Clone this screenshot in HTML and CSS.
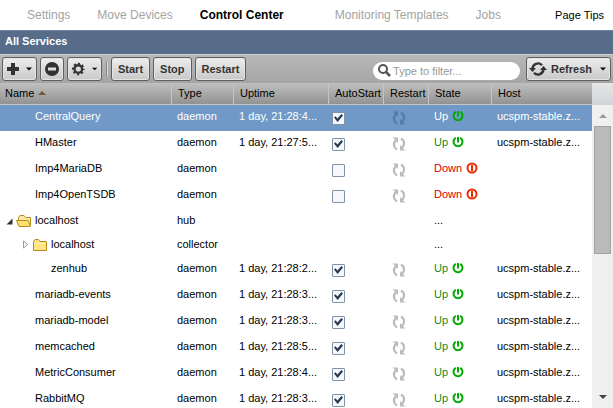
FILE: index.html
```html
<!DOCTYPE html>
<html lang="en">
<head>
<meta charset="utf-8">
<title>Control Center</title>
<link rel="stylesheet" href="styles.css">
</head>
<body>
<svg class="sprite" aria-hidden="true">
  <symbol id="cycle" viewBox="0 0 14 14">
    <path d="M5 12.500C1.500 10.500 1 6.500 3.500 3.500M9 1.500C12.500 3.500 13 7.500 10.500 10.500" fill="none" stroke="currentColor" stroke-width="2.200"/>
    <path d="M0.500 0.500H6V6L4.300 4.300L2.500 5.500L3 2.500ZM13.500 13.500H8V8L9.700 9.700L11.500 8.500L11 11.500Z" fill="currentColor"/>
  </symbol>
  <symbol id="up" viewBox="0 0 12 12">
    <path d="M3.800 1.900A4.500 4.500 0 1 0 8.200 1.900" fill="none" stroke="currentColor" stroke-width="2"/>
    <path d="M6 1V6.500" stroke="currentColor" stroke-width="2"/>
  </symbol>
  <symbol id="down" viewBox="0 0 12 12">
    <circle cx="6" cy="6" r="4.500" fill="none" stroke="currentColor" stroke-width="2"/>
    <path d="M6 3V9" stroke="currentColor" stroke-width="2"/>
  </symbol>
  <symbol id="caret" viewBox="0 0 6 4"><path d="M0 0.500H6L3 3.500Z" fill="currentColor"/></symbol>
</svg>
<div class="app">
  <nav class="nav">
    <a href="#">Settings</a>
    <a href="#">Move Devices</a>
    <a href="#" class="current">Control Center</a>
    <a href="#" class="apart">Monitoring Templates</a>
    <a href="#">Jobs</a>
    <a href="#" class="tips">Page Tips</a>
  </nav>
  <h1 class="title">All Services</h1>
  <div class="toolbar">
    <button class="btn menu" aria-label="Add"><svg width="12" height="12" viewBox="0 0 12 12"><path d="M6 0V12M0 6H12" stroke="#333" stroke-width="4"/></svg><svg class="caret" width="6" height="4"><use href="#caret"/></svg></button>
    <button class="btn icon" aria-label="Remove"><svg width="14" height="14" viewBox="0 0 14 14"><circle cx="7" cy="7" r="7" fill="#333"/><path d="M3 7H11" stroke="#ddd" stroke-width="3"/></svg></button>
    <button class="btn menu" aria-label="Configure"><svg width="14" height="14" viewBox="0 0 14 14"><circle cx="7" cy="7" r="4.200" fill="none" stroke="#333" stroke-width="2.600"/><circle cx="7" cy="7" r="6" fill="none" stroke="#333" stroke-width="2" stroke-dasharray="2.400 2.312" stroke-dashoffset="1.200"/></svg><svg class="caret" width="6" height="4"><use href="#caret"/></svg></button>
    <span class="divider"></span>
    <button class="btn">Start</button>
    <button class="btn">Stop</button>
    <button class="btn">Restart</button>
    <label class="search">
      <svg width="13" height="13" viewBox="0 0 13 13"><circle cx="5" cy="5" r="4" fill="none" stroke="#555" stroke-width="2"/><path d="M8 8L12 12" stroke="#555" stroke-width="2.500"/></svg>
      <input type="text" placeholder="Type to filter..." aria-label="Filter services">
    </label>
    <button class="btn refresh"><svg width="18" height="14" viewBox="0 0 18 14"><path d="M3.500 7A5.500 5.500 0 0 1 13 3.200M14.500 7A5.500 5.500 0 0 1 5 10.800" fill="none" stroke="#333" stroke-width="2.400"/><path d="M0 6H7L3.500 10ZM11 8H18L14.500 4Z" fill="#333"/></svg>Refresh<svg class="caret" width="6" height="4"><use href="#caret"/></svg></button>
  </div>
  <div class="grid">
    <div class="view">
      <table>
        <colgroup><col class="c-name"><col class="c-type"><col class="c-uptime"><col class="c-auto"><col class="c-restart"><col class="c-state"><col></colgroup>
        <thead>
          <tr><th>Name<svg class="sort" width="8" height="4" viewBox="0 0 8 4"><path d="M0 4L4 0L8 4Z" fill="#755538"/></svg></th><th>Type</th><th>Uptime</th><th>AutoStart</th><th>Restart</th><th>State</th><th>Host</th></tr>
        </thead>
        <tbody>
          <tr class="selected"><td class="l1">CentralQuery</td><td>daemon</td><td>1 day, 21:28:4...</td><td class="tick"><input type="checkbox" checked aria-label="AutoStart CentralQuery"></td><td class="again"><svg><use href="#cycle"/></svg></td><td class="up">Up<svg><use href="#up"/></svg></td><td>ucspm-stable.z...</td></tr>
          <tr><td class="l1">HMaster</td><td>daemon</td><td>1 day, 21:27:5...</td><td class="tick"><input type="checkbox" checked aria-label="AutoStart HMaster"></td><td class="again"><svg><use href="#cycle"/></svg></td><td class="up">Up<svg><use href="#up"/></svg></td><td>ucspm-stable.z...</td></tr>
          <tr><td class="l1">Imp4MariaDB</td><td>daemon</td><td></td><td class="tick"><input type="checkbox" aria-label="AutoStart Imp4MariaDB"></td><td class="again"><svg><use href="#cycle"/></svg></td><td class="down">Down<svg><use href="#down"/></svg></td><td></td></tr>
          <tr><td class="l1">Imp4OpenTSDB</td><td>daemon</td><td></td><td class="tick"><input type="checkbox" aria-label="AutoStart Imp4OpenTSDB"></td><td class="again"><svg><use href="#cycle"/></svg></td><td class="down">Down<svg><use href="#down"/></svg></td><td></td></tr>
          <tr class="group"><td class="l0"><svg class="arrow" width="7" height="7" viewBox="0 0 7 7"><path d="M6.500 0.500V6.500H0.500Z" fill="#333"/></svg><svg class="folder" width="16" height="14" viewBox="0 0 16 14"><path d="M2.500 11V3.500L4 1.500H8L9.500 3.500H14.500V11Z" fill="#fbe9a5" stroke="#b58a20"/><path d="M0.500 6.500H12L14.500 12.500H3Z" fill="#ffdf70" stroke="#b58a20"/></svg>localhost</td><td>hub</td><td></td><td></td><td></td><td>...</td><td></td></tr>
          <tr class="group"><td class="l1n"><svg class="arrow" width="7" height="9" viewBox="0 0 7 9"><path d="M1.500 1L5.500 4.500L1.500 8Z" fill="#fff" stroke="#999"/></svg><svg class="folder" width="16" height="14" viewBox="0 0 16 14"><path d="M1.500 12.500V3.500L3 1.500H6.500L8 3.500H14.500V12.500Z" fill="#ffe382" stroke="#b58a20"/><path d="M2 5.500H14" stroke="#fff3bd"/></svg>localhost</td><td>collector</td><td></td><td></td><td></td><td>...</td><td></td></tr>
          <tr><td class="l2">zenhub</td><td>daemon</td><td>1 day, 21:28:2...</td><td class="tick"><input type="checkbox" checked aria-label="AutoStart zenhub"></td><td class="again"><svg><use href="#cycle"/></svg></td><td class="up">Up<svg><use href="#up"/></svg></td><td>ucspm-stable.z...</td></tr>
          <tr><td class="l1">mariadb-events</td><td>daemon</td><td>1 day, 21:28:3...</td><td class="tick"><input type="checkbox" checked aria-label="AutoStart mariadb-events"></td><td class="again"><svg><use href="#cycle"/></svg></td><td class="up">Up<svg><use href="#up"/></svg></td><td>ucspm-stable.z...</td></tr>
          <tr><td class="l1">mariadb-model</td><td>daemon</td><td>1 day, 21:28:3...</td><td class="tick"><input type="checkbox" checked aria-label="AutoStart mariadb-model"></td><td class="again"><svg><use href="#cycle"/></svg></td><td class="up">Up<svg><use href="#up"/></svg></td><td>ucspm-stable.z...</td></tr>
          <tr><td class="l1">memcached</td><td>daemon</td><td>1 day, 21:28:5...</td><td class="tick"><input type="checkbox" checked aria-label="AutoStart memcached"></td><td class="again"><svg><use href="#cycle"/></svg></td><td class="up">Up<svg><use href="#up"/></svg></td><td>ucspm-stable.z...</td></tr>
          <tr><td class="l1">MetricConsumer</td><td>daemon</td><td>1 day, 21:28:4...</td><td class="tick"><input type="checkbox" checked aria-label="AutoStart MetricConsumer"></td><td class="again"><svg><use href="#cycle"/></svg></td><td class="up">Up<svg><use href="#up"/></svg></td><td>ucspm-stable.z...</td></tr>
          <tr><td class="l1">RabbitMQ</td><td>daemon</td><td>1 day, 21:28:3...</td><td class="tick"><input type="checkbox" checked aria-label="AutoStart RabbitMQ"></td><td class="again"><svg><use href="#cycle"/></svg></td><td class="up">Up<svg><use href="#up"/></svg></td><td>ucspm-stable.z...</td></tr>
        </tbody>
      </table>
    </div>
    <div class="rail">
      <div class="corner"></div>
      <div class="track">
        <svg width="8" height="4" viewBox="0 0 8 4"><path d="M0 4L4 0L8 4Z" fill="#999"/></svg>
        <div class="thumb"></div>
        <svg class="end" width="8" height="4" viewBox="0 0 8 4"><path d="M0 0H8L4 4Z" fill="#444"/></svg>
      </div>
    </div>
  </div>
</div>
</body>
</html>
```
FILE: styles.css
```css
* { box-sizing: border-box; }

body {
  margin: 0;
  font: 11px/14px "Liberation Sans", Arial, sans-serif;
  color: #000;
  background: #fff;
}

.sprite { display: none; }

.app {
  display: flex;
  flex-direction: column;
  height: 100vh;
  overflow: hidden;
}

.nav {
  display: flex;
  align-items: center;
  gap: 27px;
  height: 30px;
  padding: 0 9px 0 27px;
  flex: none;
  font-size: 12px;
  white-space: nowrap;
}

.nav a { color: #a3a3a3; text-decoration: none; }
.nav .current { color: #000; font-weight: bold; }
.nav .apart { margin-left: 24px; }
.nav .tips { margin-left: auto; color: #000; font-size: 11px; }

.title {
  flex: none;
  margin: 0;
  height: 24px;
  padding: 0 5px;
  border-top: 1px solid #7089a8;
  background: #566c88;
  color: #fff;
  font-size: 11px;
  line-height: 20px;
}

.toolbar {
  display: flex;
  align-items: center;
  flex: none;
  gap: 3px;
  height: 29px;
  padding: 0 2px;
  border-top: 1px solid #d0d0d0;
  background: linear-gradient(#b8b8b8, #a5a5a5);
}

.btn {
  display: flex;
  align-items: center;
  justify-content: center;
  flex: none;
  height: 24px;
  padding: 0 6px;
  border: 1px solid #606060;
  border-radius: 3px;
  background: linear-gradient(#eee, #c8c8c8);
  box-shadow: inset 0 0 0 1px #e4e4e4;
  color: #333;
  font: bold 11px/14px "Liberation Sans", Arial, sans-serif;
}

.btn.icon { padding: 0 4px; }
.btn.menu { width: 35px; gap: 7px; padding: 0 4px; }
.btn .caret { color: #000; }
.btn.refresh { gap: 4px; padding: 0 4px 0 2px; }
.btn.refresh .caret { margin-left: 4px; }

.divider {
  width: 2px;
  height: 14px;
  margin-left: 1px;
  border-left: 1px solid #888;
  border-right: 1px solid #d8d8d8;
}

.search {
  display: flex;
  align-items: center;
  gap: 2px;
  width: 147px;
  height: 18px;
  margin: 3px 3px 0 auto;
  padding: 0 5px;
  border-radius: 9px;
  background: #fff;
}

.search svg { flex: none; }

.search input {
  flex: 1;
  min-width: 0;
  height: 16px;
  padding: 0;
  border: 0;
  outline: 0;
  background: none;
  font: 11px/14px "Liberation Sans", Arial, sans-serif;
}

.search input::placeholder { color: #999; }

.grid { display: flex; flex: 1; min-height: 0; }
.view { flex: 1; min-width: 0; overflow: hidden; }

table {
  width: 100%;
  border-spacing: 0;
  table-layout: fixed;
}

.c-name { width: 172px; }
.c-type { width: 62px; }
.c-uptime { width: 95px; }
.c-auto { width: 55px; }
.c-restart { width: 45px; }
.c-state { width: 63px; }

th {
  height: 22px;
  padding: 0 0 2px 5px;
  border-right: 1px solid #c5c5c5;
  border-bottom: 1px solid #c5c5c5;
  background: linear-gradient(#c0c0c0, #929292);
  font-weight: normal;
  text-align: left;
  white-space: nowrap;
}

th:last-child { border-right: 0; }
th + th { padding-left: 6px; }

.sort { margin-left: 4px; vertical-align: 2px; }

td {
  height: 26px;
  padding: 0 2px 4px 5px;
  white-space: nowrap;
}

.group td { height: 24px; padding-bottom: 2px; }
.selected td { background: #7099c7; color: #fff; }

.l1 { padding-left: 35px; }
.l2 { padding-left: 51px; }
.l0 { padding-left: 6px; }
.l1n { padding-left: 22px; }

.arrow { width: 7px; margin-right: 3px; vertical-align: -1px; }
.folder { margin-right: 3px; vertical-align: -4px; }

td.tick { padding: 0 0 0 3px; }

.tick input {
  display: grid;
  place-items: center;
  appearance: none;
  width: 13px;
  height: 13px;
  margin: 0;
  border: 1px solid #8092a8;
  border-radius: 1px;
  background: #f6f9fc;
}

.tick input:checked::before {
  content: "";
  width: 9px;
  height: 8px;
  background: #2b3a52;
  clip-path: polygon(0 45%, 18% 28%, 38% 55%, 82% 0, 100% 18%, 40% 100%);
}

td.again { padding: 0 0 0 8px; color: #bbb; }
.again svg { display: block; width: 14px; height: 14px; }
.selected .again { color: #547ba6; }

.up { color: #178a17; }
.down { color: #d00; }

.up svg,
.down svg {
  width: 12px;
  height: 12px;
  margin-left: 4px;
  color: #0a0;
  vertical-align: -2px;
}

.down svg { color: #ee2a00; }

.rail { display: flex; flex-direction: column; width: 21px; flex: none; }
.corner { height: 22px; background: linear-gradient(#e6e6e8, #d2d5d8); flex: none; }

.track {
  display: flex;
  flex-direction: column;
  align-items: center;
  flex: 1;
  padding: 9px 0;
  background: #f0f0f0;
}

.thumb {
  width: 17px;
  height: 45%;
  flex-shrink: 0;
  margin-top: 8px;
  border: 1px solid #a3a3a3;
  background: #bababa;
}

.track .end { margin-top: auto; }
```
